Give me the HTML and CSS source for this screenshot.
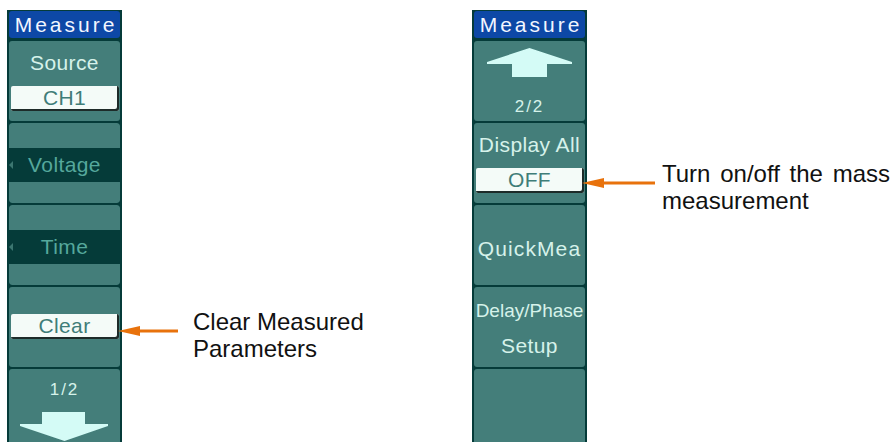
FILE: index.html
```html
<!DOCTYPE html>
<html>
<head>
    <meta charset="UTF-8">
    <title>Measure menu</title>
    <link rel="stylesheet" href="styles.css">
</head>
<body>
    <div class="page">
      <!-- page 1 of the Measure menu -->
      <div class="group group-left">
        <div class="menu">
          <div class="menu-title">Measure</div>
          <div class="key">
            <div class="key-label">Source</div>
            <div class="key-value">CH1</div>
          </div>
          <div class="key key-dim">
            <div class="band band-top"></div>
            <div class="band-mid">Voltage</div>
            <div class="band band-bot"></div>
          </div>
          <div class="key key-dim">
            <div class="band band-top"></div>
            <div class="band-mid">Time</div>
            <div class="band band-bot"></div>
          </div>
          <div class="key">
            <div class="key-value key-value-low">Clear</div>
          </div>
          <div class="key">
            <div class="key-page">1/2</div>
            <svg class="page-arrow" width="111" height="50" viewBox="0 0 111 50">
              <polygon points="33,12 76,12 76,24 99,24 99,26 55.5,41 11,26 11,24 33,24" fill="#d4fbf6"/>
            </svg>
          </div>
        </div>
        <div class="callout callout-clear">
          <svg class="callout-arrow" width="60" height="12" viewBox="0 0 60 12">
            <line x1="18" y1="6" x2="60" y2="6" stroke="#e8720c" stroke-width="3"/>
            <polygon points="0,6 22,1 22,11" fill="#e8720c"/>
          </svg>
          <p class="callout-text">Clear Measured<br>Parameters</p>
        </div>
      </div>

      <!-- page 2 of the Measure menu -->
      <div class="group group-right">
        <div class="menu">
          <div class="menu-title">Measure</div>
          <div class="key">
            <svg class="page-arrow" width="111" height="40" viewBox="0 0 111 40">
              <polygon points="55.5,7 98,21 98,23 73,23 73,36 38,36 38,23 13,23 13,21" fill="#d4fbf6"/>
            </svg>
            <div class="key-page key-page-low">2/2</div>
          </div>
          <div class="key">
            <div class="key-label">Display All</div>
            <div class="key-value">OFF</div>
          </div>
          <div class="key">
            <div class="key-label key-label-wide">QuickMea</div>
          </div>
          <div class="key">
            <div class="key-lines"><span class="key-narrow">Delay/Phase</span><br>Setup</div>
          </div>
          <div class="key"></div>
        </div>
        <div class="callout callout-all">
          <svg class="callout-arrow" width="73" height="12" viewBox="0 0 73 12">
            <line x1="18" y1="6" x2="73" y2="6" stroke="#e8720c" stroke-width="3"/>
            <polygon points="0,6 22,1 22,11" fill="#e8720c"/>
          </svg>
          <p class="callout-text callout-text-wide">Turn on/off the mass measurement</p>
        </div>
      </div>
    </div>
</body>
</html>
```

FILE: styles.css
```css
/* white sheet, the two menus sit side by side */
body {
  margin: 0;
  background-color: #ffffff;
  font-family: "Liberation Sans", Arial, sans-serif;
  overflow: hidden;
}
.page {
  display: flex;
  align-items: flex-start;
  padding: 10px 0 0 7px;
  height: 442px;
  box-sizing: border-box;
  overflow: hidden;
}
.group {
  display: flex;
  align-items: flex-start;
  flex: none;
}
.group-left {
  width: 465px;
}

/* the scope side menu */
.menu {
  width: 115px;
  flex: none;
  box-sizing: border-box;
  padding: 1px 2px 0;
  background-color: #053b39;
  display: flex;
  flex-direction: column;
  gap: 2px;
  font-family: "Liberation Sans", Arial, sans-serif;
  font-size: 21px;
  letter-spacing: 0.4px;
  color: #d6f2ea;
}
.menu-title {
  height: 27px;
  margin-bottom: 1px;
  background-color: #0d48a6;
  border-radius: 3px;
  color: #f2f6ff;
  text-align: center;
  line-height: 27px;
  font-size: 21px;
  letter-spacing: 3px;
  text-indent: 3px;
}
.key {
  height: 80px;
  flex: none;
  background-color: #447e7a;
  border-radius: 3px;
  display: flex;
  flex-direction: column;
  align-items: center;
  white-space: nowrap;
  overflow: hidden;
}
.key-label {
  margin-top: 11px;
  line-height: 22px;
}
.key-label-wide {
  margin-top: 33px;
  letter-spacing: 1.1px;
}
.key-value {
  width: 108px;
  height: 25px;
  margin-top: 12px;
  box-sizing: border-box;
  background-color: #f4fbf8;
  border-radius: 2px;
  box-shadow: inset -2px -2px 0 #1d2b29;
  color: #3f7d78;
  text-align: center;
  line-height: 24px;
}
.key-value-low {
  margin-top: 27px;
}
.key-page {
  margin-top: 11px;
  line-height: 20px;
  font-size: 17px;
  letter-spacing: 2px;
}
.key-page-low {
  margin-top: 16px;
}
.page-arrow {
  display: block;
  flex: none;
}
.key-lines {
  padding-top: 5px;
  line-height: 35px;
  text-align: center;
}
.key-narrow {
  font-size: 19px;
  letter-spacing: 0;
}

/* greyed out items: dark bar between two light bands */
.key-dim {
  background-color: transparent;
  align-items: stretch;
}
.band {
  background-color: #447e7a;
}
.band-top {
  height: 25px;
  border-radius: 3px 3px 0 0;
}
.band-bot {
  height: 21px;
  border-radius: 0 0 3px 3px;
}
.band-mid {
  position: relative;
  height: 34px;
  line-height: 34px;
  text-align: center;
  color: #55a89c;
}
.band-mid::before {
  content: "";
  position: absolute;
  left: 0;
  top: 13px;
  border-top: 4px solid transparent;
  border-bottom: 4px solid transparent;
  border-right: 4px solid #3b7670;
}

/* orange pointers with their notes */
.callout {
  display: flex;
  align-items: flex-start;
}
.callout-clear {
  margin: 298px 0 0 -4px;
}
.callout-all {
  margin: 150px 0 0 -5px;
}
.callout-arrow {
  display: block;
  flex: none;
  margin-top: 17px;
}
.callout-text {
  margin: 0 0 0 15px;
  font-size: 24px;
  line-height: 27px;
  color: #111111;
}
.callout-text-wide {
  width: 228px;
  margin-left: 7px;
  text-align: justify;
}
```
